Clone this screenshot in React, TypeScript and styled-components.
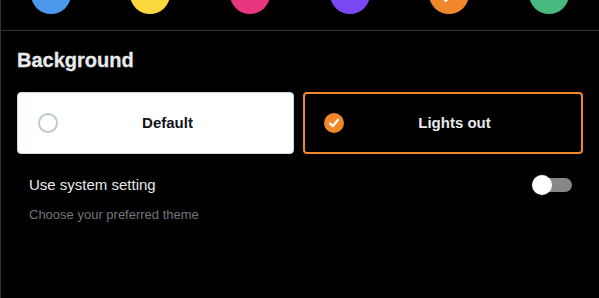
import * as React from 'react';
import styled, { createGlobalStyle } from 'styled-components';

const GlobalStyle = createGlobalStyle`
	html, body {
		margin: 0;
		padding: 0;
		background: #000;
		overflow: hidden;
	}
	body {
		font-family: 'Liberation Sans', Arial, sans-serif;
		color: #e7e9ea;
	}
`;

const Page = styled.div`
	display: flex;
	flex-direction: column;
	height: 100vh;
	overflow: hidden;
	border-left: 1px solid #2f3336;
	box-sizing: border-box;
`;

const ColorRow = styled.div`
	display: grid;
	grid-template-columns: repeat(6, 1fr);
	margin-top: -26px;
	padding-bottom: 16px;
	border-bottom: 1px solid #2f3336;
`;

const ColorCell = styled.div`
	display: flex;
	justify-content: center;
`;

const Swatch = styled.div<{ $color: string }>`
	width: 40px;
	height: 40px;
	border-radius: 50%;
	background: ${p => p.$color};
	display: flex;
	align-items: center;
	justify-content: center;

	svg {
		width: 24px;
		height: 24px;
		fill: #fff;
	}
`;

const Section = styled.section`
	display: flex;
	flex-direction: column;
	padding: 17px 16px 0;
`;

const Heading = styled.h2`
	margin: 0;
	font-size: 20px;
	line-height: 24px;
	font-weight: 700;
	color: #e7e9ea;
	-webkit-text-stroke: 0.3px #e7e9ea;
`;

const Options = styled.div`
	display: grid;
	grid-template-columns: 277px 1fr;
	gap: 9px;
	margin-top: 20px;
`;

const Option = styled.div<{ $dark?: boolean; $selected?: boolean }>`
	display: flex;
	align-items: center;
	height: 62px;
	box-sizing: border-box;
	padding: 0 16px 0 ${p => (p.$selected ? 19 : 20)}px;
	border-radius: 4px;
	background: ${p => (p.$dark ? '#000' : '#fff')};
	border: ${p => (p.$selected ? '2px solid #f0872a' : '1px solid #cfd9de')};
	color: ${p => (p.$dark ? '#e7e9ea' : '#0f1419')};
`;

const Radio = styled.div<{ $checked?: boolean }>`
	width: 20px;
	height: 20px;
	flex: none;
	box-sizing: border-box;
	border-radius: 50%;
	border: ${p => (p.$checked ? 'none' : '2px solid #b9cad3')};
	background: ${p => (p.$checked ? '#f0872a' : 'transparent')};
	display: flex;
	align-items: center;
	justify-content: center;

	svg {
		width: 12px;
		height: 12px;
		fill: none;
		stroke: #fff;
		stroke-width: 2.2;
		stroke-linecap: round;
		stroke-linejoin: round;
	}
`;

const OptionLabel = styled.span`
	flex: 1;
	text-align: center;
	font-size: 15px;
	font-weight: 700;
	line-height: 20px;
`;

const SettingRow = styled.div`
	display: flex;
	align-items: center;
	justify-content: space-between;
	margin-top: 21px;
	padding: 0 11px 0 12px;
`;

const SettingLabel = styled.span`
	font-size: 15px;
	line-height: 20px;
	color: #e7e9ea;
`;

const Switch = styled.div`
	position: relative;
	width: 40px;
	height: 20px;
`;

const Track = styled.div`
	position: absolute;
	left: 4px;
	right: 0;
	top: 3px;
	height: 14px;
	border-radius: 7px;
	background: #858789;
`;

const Knob = styled.div`
	position: absolute;
	left: 0;
	top: 0;
	width: 20px;
	height: 20px;
	border-radius: 50%;
	background: #fff;
	box-shadow: 0 0 2px rgba(255, 255, 255, 0.25);
`;

const Hint = styled.p`
	margin: 12px 0 0;
	padding-left: 12px;
	font-size: 13px;
	line-height: 16px;
	color: #71767b;
`;

const CheckIcon = () => (
	<svg viewBox='0 0 24 24' aria-hidden='true'>
		<path d='M9 20c-.264 0-.52-.104-.707-.293l-4.785-4.785c-.39-.39-.39-1.023 0-1.414s1.023-.39 1.414 0l3.946 3.945L18.075 4.41c.32-.45.94-.558 1.395-.24.45.318.56.942.24 1.394L9.817 19.577c-.17.24-.438.395-.732.42-.028.002-.057.003-.085.003z' />
	</svg>
);

const RadioCheck = () => (
	<svg viewBox='0 0 12 12' aria-hidden='true'>
		<polyline points='2,6.5 4.8,9.2 10,2.8' />
	</svg>
);

const colors = [
	{ color: '#4b97ec' },
	{ color: '#fbd93c' },
	{ color: '#e8377f' },
	{ color: '#7a47f2' },
	{ color: '#f0872a', selected: true },
	{ color: '#48b97e' },
];

export default function App() {
	return (
		<>
			<GlobalStyle />
			<Page>
				<ColorRow>
					{colors.map(c => (
						<ColorCell key={c.color}>
							<Swatch $color={c.color}>{c.selected && <CheckIcon />}</Swatch>
						</ColorCell>
					))}
				</ColorRow>
				<Section>
					<Heading>Background</Heading>
					<Options>
						<Option>
							<Radio />
							<OptionLabel>Default</OptionLabel>
						</Option>
						<Option $dark $selected>
							<Radio $checked>
								<RadioCheck />
							</Radio>
							<OptionLabel>Lights out</OptionLabel>
						</Option>
					</Options>
					<SettingRow>
						<SettingLabel>Use system setting</SettingLabel>
						<Switch>
							<Track />
							<Knob />
						</Switch>
					</SettingRow>
					<Hint>Choose your preferred theme</Hint>
				</Section>
			</Page>
		</>
	);
}
